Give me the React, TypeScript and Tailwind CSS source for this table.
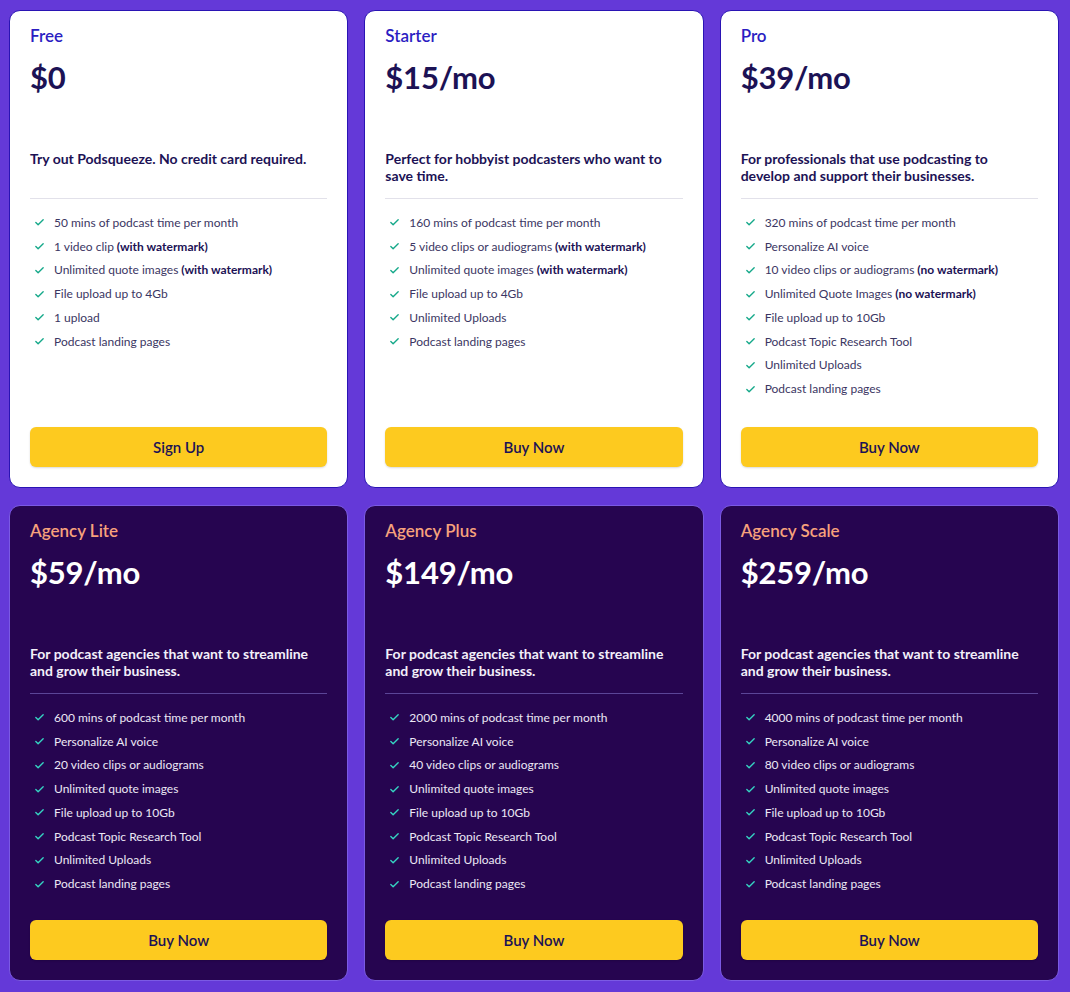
type Feature = { text: string; bold?: string };
type Plan = { name: string; price: string; desc: string; cta: string; features: Feature[]; dark?: boolean };

const plans: Plan[] = [
  {
    name: 'Free', price: '$0', desc: 'Try out Podsqueeze. No credit card required.', cta: 'Sign Up',
    features: [
      { text: '50 mins of podcast time per month' },
      { text: '1 video clip', bold: '(with watermark)' },
      { text: 'Unlimited quote images', bold: '(with watermark)' },
      { text: 'File upload up to 4Gb' },
      { text: '1 upload' },
      { text: 'Podcast landing pages' },
    ],
  },
  {
    name: 'Starter', price: '$15/mo', desc: 'Perfect for hobbyist podcasters who want to save time.', cta: 'Buy Now',
    features: [
      { text: '160 mins of podcast time per month' },
      { text: '5 video clips or audiograms', bold: '(with watermark)' },
      { text: 'Unlimited quote images', bold: '(with watermark)' },
      { text: 'File upload up to 4Gb' },
      { text: 'Unlimited Uploads' },
      { text: 'Podcast landing pages' },
    ],
  },
  {
    name: 'Pro', price: '$39/mo', desc: 'For professionals that use podcasting to develop and support their businesses.', cta: 'Buy Now',
    features: [
      { text: '320 mins of podcast time per month' },
      { text: 'Personalize AI voice' },
      { text: '10 video clips or audiograms', bold: '(no watermark)' },
      { text: 'Unlimited Quote Images', bold: '(no watermark)' },
      { text: 'File upload up to 10Gb' },
      { text: 'Podcast Topic Research Tool' },
      { text: 'Unlimited Uploads' },
      { text: 'Podcast landing pages' },
    ],
  },
];

const agency = (name: string, price: string, mins: string, clips: string): Plan => ({
  name, price, dark: true, cta: 'Buy Now',
  desc: 'For podcast agencies that want to streamline and grow their business.',
  features: [
    { text: `${mins} mins of podcast time per month` },
    { text: 'Personalize AI voice' },
    { text: `${clips} video clips or audiograms` },
    { text: 'Unlimited quote images' },
    { text: 'File upload up to 10Gb' },
    { text: 'Podcast Topic Research Tool' },
    { text: 'Unlimited Uploads' },
    { text: 'Podcast landing pages' },
  ],
});

const agencyPlans = [
  agency('Agency Lite', '$59/mo', '600', '20'),
  agency('Agency Plus', '$149/mo', '2000', '40'),
  agency('Agency Scale', '$259/mo', '4000', '80'),
];

function Check({ dark }: { dark?: boolean }) {
  return (
    <svg viewBox="0 0 24 24" className={dark ? 'w-[11px] h-[11px] text-[#35d3c2]' : 'w-[11px] h-[11px] text-[#16a98a]'} fill="none" stroke="currentColor" strokeWidth={3} strokeLinecap="round" strokeLinejoin="round">
      <polyline points="20 6 9 17 4 12" />
    </svg>
  );
}

function Card({ p }: { p: Plan }) {
  const d = p.dark;
  return (
    <div className={`flex flex-col rounded-[11px] border px-[20px] pt-[14px] pb-[20px] ${d ? 'bg-[#260550] border-[#7b5ae4]' : 'bg-white border-[#2a14b4]'}`}>
      <div className={`text-[17px] leading-[22px] font-semibold ${d ? 'text-[#f7a27c]' : 'text-[#2b1dc2]'}`}>{p.name}</div>
      <div className={`mt-[12px] text-[31px] leading-[36px] font-bold tracking-[-0.2px] ${d ? 'text-white' : 'text-[#1c1255]'}`}>{p.price}</div>
      <div className={`mt-[55px] min-h-[34px] text-[14px] leading-[17px] font-bold ${d ? 'text-[#f3f0fa]' : 'text-[#1c1255]'}`}>{p.desc}</div>
      <div className={`mt-[14px] h-px ${d ? 'bg-[#5b4597]' : 'bg-[#e2e1ea]'}`} />
      <ul className="mt-[12px]">
        {p.features.map((f, i) => (
          <li key={i} className={`flex items-center h-[23.75px] text-[12px] ${d ? 'text-[#ece8f5]' : 'text-[#3b3663]'}`}>
            <span className="w-[24px] pl-[4px] flex items-center"><Check dark={d} /></span>
            <span>
              {f.text}
              {f.bold && <b className={`font-bold ${d ? 'text-white' : 'text-[#1c1255]'}`}> {f.bold}</b>}
            </span>
          </li>
        ))}
      </ul>
      <button className="mt-auto h-[40px] w-full rounded-[6px] bg-[#fdca1f] text-[15px] font-semibold text-[#1c1255] shadow-[0_1px_2px_rgba(0,0,0,0.15)]">{p.cta}</button>
    </div>
  );
}

export default function App() {
  return (
    <main className="min-h-[992px] w-[1070px] bg-[#6439d8] pl-[9px] pr-[11px] pt-[10px] pb-[11px]" style={{ fontFamily: 'Lato, "Noto Sans", sans-serif' }}>
      <div className="grid grid-cols-3 gap-x-[16px] gap-y-[17px] grid-rows-[478px_476px]">
        {plans.map(p => <Card key={p.name} p={p} />)}
        {agencyPlans.map(p => <Card key={p.name} p={p} />)}
      </div>
    </main>
  );
}
